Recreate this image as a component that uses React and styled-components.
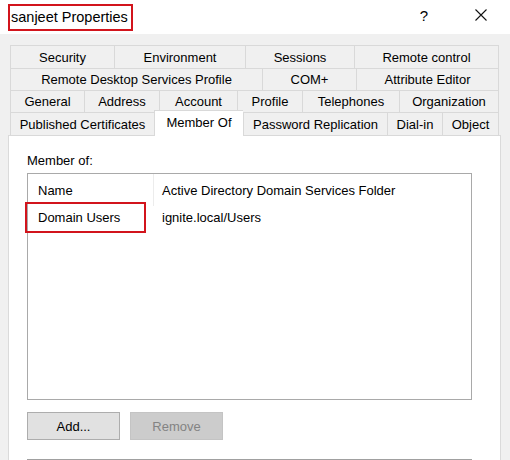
import React from "react";
import styled, { createGlobalStyle } from "styled-components";

const GlobalStyle = createGlobalStyle`
  html, body {
    margin: 0;
    padding: 0;
    background: #ffffff;
  }
  body {
    font-family: "Liberation Sans", Arial, sans-serif;
    color: #000;
    width: 510px;
    height: 460px;
    overflow: hidden;
  }
`;

const tabRows = [
  [
    ["Security", 104],
    ["Environment", 131],
    ["Sessions", 109],
    ["Remote control", 145],
  ],
  [
    ["Remote Desktop Services Profile", 252],
    ["COM+", 94],
    ["Attribute Editor", 143],
  ],
  [
    ["General", 74],
    ["Address", 75],
    ["Account", 78],
    ["Profile", 65],
    ["Telephones", 97],
    ["Organization", 100],
  ],
  [
    ["Published Certificates", 144],
    ["Member Of", 89, true],
    ["Password Replication", 144],
    ["Dial-in", 55],
    ["Object", 57],
  ],
];

export default function App() {
  return (
    <>
      <GlobalStyle />
      <Window>
        <TitleBar>
          <Title>sanjeet Properties</Title>
          <TitleButtons>
            <HelpGlyph>?</HelpGlyph>
            <CloseIcon viewBox="0 0 12 12">
              <path d="M0.5 0.5 L11.5 11.5 M11.5 0.5 L0.5 11.5" stroke="#111" strokeWidth="1.1" fill="none" />
            </CloseIcon>
          </TitleButtons>
        </TitleBar>

        <Body>
          <Tabs>
            {tabRows.map((row, i) => (
              <TabRow key={i}>
                {row.map(([label, w, active]) => (
                  <Tab key={label} $w={w} $active={active}>
                    {label}
                  </Tab>
                ))}
              </TabRow>
            ))}
          </Tabs>

          <Panel>
            <Label>Member of:</Label>
            <ListBox>
              <ListHeader>
                <NameCol>Name</NameCol>
                <FolderCol>Active Directory Domain Services Folder</FolderCol>
              </ListHeader>
              <ListRow>
                <NameCol>
                  Domain Users
                  <Highlight />
                </NameCol>
                <FolderCol>ignite.local/Users</FolderCol>
              </ListRow>
            </ListBox>
            <Buttons>
              <Button>Add...</Button>
              <Button disabled>Remove</Button>
            </Buttons>
            <NextBox />
          </Panel>
        </Body>
      </Window>
    </>
  );
}

const Window = styled.div`
  width: 510px;
  height: 460px;
  display: flex;
  flex-direction: column;
  background: #f0f0f0;
  overflow: hidden;
`;

const TitleBar = styled.div`
  height: 34px;
  flex-shrink: 0;
  background: #ffffff;
  display: flex;
  align-items: center;
  justify-content: space-between;
  padding: 0 0 0 8px;
`;

const Title = styled.div`
  font-size: 14.5px;
  line-height: 23px;
  padding: 0 3px 0 1px;
  border: 2px solid #d2141c;
  margin-top: 1px;
  white-space: nowrap;
`;

const TitleButtons = styled.div`
  display: flex;
  align-items: center;
  width: 100px;
  height: 100%;
`;

const HelpGlyph = styled.span`
  font-size: 15px;
  width: 14px;
  text-align: center;
  margin-left: 7px;
  margin-top: -4px;
`;

const CloseIcon = styled.svg`
  width: 12px;
  height: 12px;
  margin-left: 44px;
  margin-top: -4px;
`;

const Body = styled.div`
  flex: 1;
  display: flex;
  flex-direction: column;
  padding: 11px 9px 0 8px;
`;

const Tabs = styled.div`
  display: flex;
  flex-direction: column;
  padding-left: 2px;
  position: relative;
  z-index: 1;
`;

const TabRow = styled.div`
  display: flex;
  height: 22px;
  &:first-child {
    height: 23px;
  }
  &:last-child {
    height: 23px;
  }
`;

const Tab = styled.div`
  width: ${(p) => p.$w}px;
  flex-shrink: 0;
  box-sizing: border-box;
  display: flex;
  align-items: center;
  justify-content: center;
  font-size: 13px;
  white-space: nowrap;
  background: ${(p) => (p.$active ? "#ffffff" : "#f0f0f0")};
  border: 1px solid #d9d9d9;
  border-right: none;
  border-bottom: ${(p) => (p.$active ? "none" : "1px solid #d9d9d9")};
  margin-bottom: -1px;
  ${(p) =>
    p.$active &&
    `
    margin-top: -2px;
    height: calc(100% + 3px);
    padding-bottom: 2px;
  `}
  &:last-child {
    border-right: 1px solid #d9d9d9;
  }
`;

const Panel = styled.div`
  flex: 1;
  background: #ffffff;
  border: 1px solid #dadada;
  border-bottom: none;
  padding: 17px 0 0 18px;
  display: flex;
  flex-direction: column;
`;

const Label = styled.div`
  font-size: 13px;
  line-height: 16px;
  height: 20px;
`;

const ListBox = styled.div`
  width: 445px;
  height: 227px;
  box-sizing: border-box;
  border: 1px solid #a9a9a9;
  display: flex;
  flex-direction: column;
`;

const ListHeader = styled.div`
  display: flex;
  height: 32px;
  align-items: center;
`;

const ListRow = styled.div`
  display: flex;
  height: 23px;
  align-items: center;
`;

const NameCol = styled.div`
  position: relative;
  width: 116px;
  padding-left: 10px;
  font-size: 13px;
  align-self: stretch;
  display: flex;
  align-items: center;
  ${ListHeader} & {
    border-right: 1px solid #ececec;
    width: 115px;
  }
`;

const FolderCol = styled.div`
  font-size: 13px;
  padding-left: 8px;
  white-space: nowrap;
`;

const Highlight = styled.div`
  position: absolute;
  left: -3px;
  top: -4px;
  width: 117px;
  height: 27px;
  border: 2px solid #d2141c;
`;

const Buttons = styled.div`
  display: flex;
  gap: 10px;
  margin-top: 12px;
`;

const Button = styled.button`
  width: 93px;
  height: 28px;
  box-sizing: border-box;
  font-family: inherit;
  font-size: 13px;
  color: #000;
  background: #e1e1e1;
  border: 1px solid #adadad;
  padding: 0;
  &:disabled {
    background: #cccccc;
    border-color: #c4c4c4;
    color: #838383;
  }
`;

const NextBox = styled.div`
  margin-top: 19px;
  width: 445px;
  height: 20px;
  border-top: 1px solid #a0a0a0;
`;
